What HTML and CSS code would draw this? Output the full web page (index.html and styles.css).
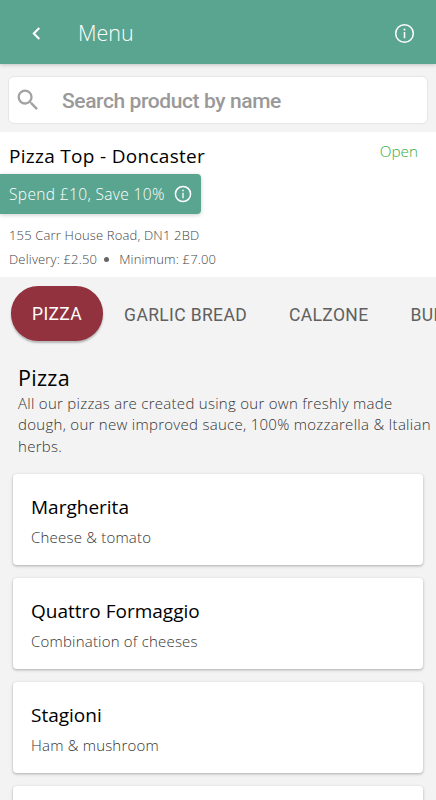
FILE: index.html
```
<!DOCTYPE html>
<html lang="en">

<head>
    <meta charset="UTF-8">
    <meta name="viewport" content="width=device-width, initial-scale=1.0">
    <title>Menu</title>
    <link rel="stylesheet" href="styles.css">
</head>

<body>
    <header class="header">
        <svg class="back" viewBox="0 0 24 24"><path d="M15.4 7.4 14 6l-6 6 6 6 1.4-1.4L10.8 12z"/></svg>
        <h1 class="header-title">Menu</h1>
        <svg class="info" viewBox="0 0 24 24"><path d="M11.2 17h1.6v-6.5h-1.6zM12 2a10 10 0 1 0 0 20 10 10 0 0 0 0-20m0 18.4a8.4 8.4 0 1 1 0-16.8 8.4 8.4 0 0 1 0 16.8M11.1 8.8h1.8V7h-1.8z"/></svg>
    </header>

    <div class="search">
        <svg class="search-icon" viewBox="0 0 24 24"><path d="M15.5 14h-.79l-.28-.27A6.47 6.47 0 0 0 16 9.5 6.5 6.5 0 1 0 9.5 16c1.61 0 3.09-.59 4.23-1.57l.27.28v.79l5 4.99L20.49 19zm-6 0a4.5 4.5 0 1 1 0-9 4.5 4.5 0 0 1 0 9"/></svg>
        <span class="search-text">Search product by name</span>
    </div>

    <section class="shop">
        <div class="shop-top">
            <h2 class="shop-name">Pizza Top - Doncaster</h2>
            <span class="status">Open</span>
        </div>
        <div class="promo">
            <span class="promo-text">Spend £10, Save 10%</span>
            <svg class="promo-info" viewBox="0 0 24 24"><path d="M11.2 17h1.6v-6.5h-1.6zM12 2a10 10 0 1 0 0 20 10 10 0 0 0 0-20m0 18.2a8.2 8.2 0 1 1 0-16.4 8.2 8.2 0 0 1 0 16.4M11.1 8.8h1.8V7h-1.8z"/></svg>
        </div>
        <p class="address">155 Carr House Road, DN1 2BD</p>
        <p class="delivery">
            <span>Delivery: £2.50</span>
            <span class="dot"></span>
            <span>Minimum: £7.00</span>
        </p>
    </section>

    <nav class="tabs">
        <span class="tab active">PIZZA</span>
        <span class="tab">GARLIC BREAD</span>
        <span class="tab">CALZONE</span>
        <span class="tab">BURGERS</span>
    </nav>

    <section class="category">
        <h2 class="category-name">Pizza</h2>
        <p class="category-text">All our pizzas are created using our own freshly made<br>dough, our new improved sauce, 100% mozzarella &amp; Italian<br>herbs.</p>
    </section>

    <main class="products">
        <div class="product">
            <h3 class="product-name">Margherita</h3>
            <p class="product-text">Cheese &amp; tomato</p>
        </div>
        <div class="product">
            <h3 class="product-name">Quattro Formaggio</h3>
            <p class="product-text">Combination of cheeses</p>
        </div>
        <div class="product">
            <h3 class="product-name">Stagioni</h3>
            <p class="product-text">Ham &amp; mushroom</p>
        </div>
        <div class="product"></div>
    </main>
</body>

</html>
```
FILE: styles.css
```
* {
    box-sizing: border-box;
}

body {
    margin: 0;
    height: 800px;
    overflow: hidden;
    background: #f3f3f3;
    font-family: "Open Sans", sans-serif;
    font-weight: 300;
    color: #000;
}

h1, h2, h3, p {
    margin: 0;
    font-weight: 400;
    white-space: nowrap;
}

.header {
    display: flex;
    align-items: center;
    height: 64px;
    padding: 2px 20px 0 24px;
    background: #5aa58f;
    color: #fff;
    box-shadow: 0 1px 4px rgba(0, 0, 0, 0.2);
}

.header svg,
.promo svg {
    fill: #fff;
}

.back {
    width: 25px;
    height: 25px;
}

.header-title {
    flex: 1;
    margin-left: 29px;
    font-size: 21.5px;
    font-weight: 300;
    line-height: 30px;
}

.info {
    width: 23px;
    height: 23px;
}

.search {
    display: flex;
    align-items: center;
    height: 48px;
    margin: 12px 8px 8px;
    padding-left: 5px;
    background: #fff;
    border: 1px solid #e6e6e6;
    border-radius: 6px;
}

.search-icon {
    width: 28px;
    height: 28px;
    fill: #a3a3a3;
}

.search-text {
    margin-left: 20px;
    padding-top: 1px;
    font-family: Roboto, sans-serif;
    font-size: 21px;
    font-weight: 500;
    letter-spacing: -0.4px;
    color: #999;
}

.shop {
    height: 145px;
    background: #fff;
}

.shop-top {
    display: flex;
    justify-content: space-between;
    height: 42px;
    padding: 9px 18px 0 9px;
}

.shop-name {
    font-size: 19px;
    line-height: 30px;
    letter-spacing: 0.3px;
}

.status {
    font-size: 15.3px;
    line-height: 20px;
    color: #36ae42;
}

.promo {
    display: flex;
    align-items: center;
    justify-content: space-between;
    width: 201px;
    height: 40px;
    padding: 0 8px 0 9px;
    background: #5aa58f;
    color: #fff;
    border-radius: 0 4px 4px 0;
    box-shadow: 0 1px 4px rgba(0, 0, 0, 0.2);
}

.promo-text {
    font-size: 15.5px;
    letter-spacing: 0.36px;
    white-space: nowrap;
}

.promo-info {
    width: 20px;
    height: 20px;
}

.address,
.delivery {
    padding-left: 9px;
    font-size: 13px;
    font-weight: 300;
    line-height: 24px;
    letter-spacing: 0.17px;
    color: #444;
}

.address {
    padding-top: 9px;
}

.delivery {
    display: flex;
    align-items: center;
}

.dot {
    width: 5px;
    height: 5px;
    margin: 1px 10px 0 7px;
    border-radius: 50%;
    background: #666;
}

.tabs {
    display: flex;
    height: 78px;
    padding: 9px 0 0 11px;
    overflow: hidden;
}

.tab {
    flex-shrink: 0;
    height: 55px;
    padding: 0 21px;
    font-family: Roboto, sans-serif;
    font-size: 17.5px;
    font-weight: 400;
    line-height: 58px;
    letter-spacing: 0.36px;
    color: #606060;
}

.active {
    background: #91323e;
    color: #fff;
    line-height: 57px;
    border-radius: 27px;
    box-shadow: 0 2px 2px rgba(0, 0, 0, 0.25);
}

.category {
    padding: 8px 0 0 18px;
}

.category-name {
    font-size: 21.5px;
    line-height: 30px;
    letter-spacing: 0.3px;
}

.category-text {
    font-size: 15px;
    font-weight: 300;
    line-height: 21.4px;
    letter-spacing: 0.28px;
    color: #333;
}

.products {
    display: flex;
    flex-direction: column;
    gap: 13px;
    padding: 17px 13px 0;
}

.product {
    flex-shrink: 0;
    height: 91px;
    padding: 18px 18px 0;
    background: #fff;
    border-radius: 4px;
    box-shadow: 0 1px 3px rgba(0, 0, 0, 0.3);
}

.product-name {
    font-size: 19px;
    line-height: 30px;
}

.product-text {
    margin-top: 4px;
    font-size: 15px;
    font-weight: 300;
    line-height: 22px;
    letter-spacing: 0.2px;
    color: #333;
}
```
